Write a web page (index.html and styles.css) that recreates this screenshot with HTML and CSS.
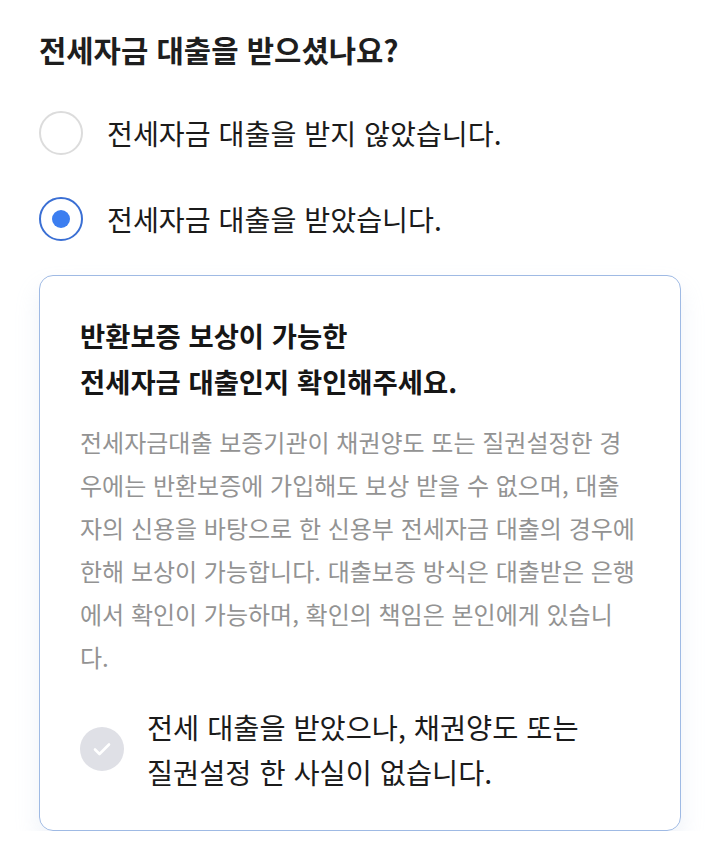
FILE: index.html
```html
<!DOCTYPE html>
<html lang="ko">
	<head>
		<meta charset="utf-8" />
		<meta name="viewport" content="width=device-width, initial-scale=1.0" />
		<title>전세자금 대출</title>
		<link rel="stylesheet" href="styles.css">
	</head>
	<body>
		<div class="page">
			<!-- 질문 -->
			<h2 class="question">전세자금 대출을 받으셨나요?</h2>
			<!-- 선택지 -->
			<div class="options">
				<div class="option">
					<span class="radio"></span>
					<span class="label">전세자금 대출을 받지 않았습니다.</span>
				</div>
				<div class="option">
					<span class="radio checked"></span>
					<span class="label">전세자금 대출을 받았습니다.</span>
				</div>
			</div>
			<!-- 안내 카드 -->
			<div class="card">
				<div class="card-title">반환보증 보상이 가능한<br>전세자금 대출인지 확인해주세요.</div>
				<p class="card-desc">전세자금대출 보증기관이 채권양도 또는 질권설정한 경우에는 반환보증에 가입해도 보상 받을 수 없으며, 대출자의 신용을 바탕으로 한 신용부 전세자금 대출의 경우에 한해 보상이 가능합니다. 대출보증 방식은 대출받은 은행에서 확인이 가능하며, 확인의 책임은 본인에게 있습니다.</p>
				<div class="confirm">
					<span class="check">
						<svg width="20" height="16" viewBox="0 0 20 16"><path d="M3 8.5l4.5 4.5L17 3.5" fill="none" stroke="#fff" stroke-width="2.6" stroke-linecap="round" stroke-linejoin="round"/></svg>
					</span>
					<span class="confirm-text">전세 대출을 받았으나, 채권양도 또는<br>질권설정 한 사실이 없습니다.</span>
				</div>
			</div>
			<!-- 안내 카드 end -->
		</div>
	</body>
</html>
```

FILE: styles.css
```css
html,
body {
	margin: 0;
	padding: 0;
	background: #fff;
	font-family: "Noto Sans CJK KR", "Noto Sans", sans-serif;
	color: #1b1b1b;
}
.page
{
	padding: 24px 39px 0 39px;
}
.question
{
	margin: 0;
	font-size: 29.7px;
	font-weight: 700;
	line-height: 52px;
	color: #1e1e1e;
}
.options
{
	display: flex;
	flex-direction: column;
	gap: 42px;
	margin-top: 35px;
}
.option
{
	display: flex;
	align-items: center;
	gap: 24px;
	height: 44px;
}
.radio
{
	box-sizing: border-box;
	width: 44px;
	height: 44px;
	border-radius: 50%;
	border: 2px solid #dcdcdc;
	display: flex;
	align-items: center;
	justify-content: center;
	flex-shrink: 0;
}
.radio.checked
{
	border-color: #3a6fd4;
}
.radio.checked::after
{
	content: '';
	width: 18px;
	height: 18px;
	border-radius: 50%;
	background: #3c7ef0;
}
.label
{
	font-size: 28.2px;
	line-height: 44px;
}
.card
{
	margin-top: 34px;
	border: 1.5px solid #9fbae4;
	border-radius: 14px;
	padding: 36px 40px 36px 40px;
	box-shadow: 0 14px 24px rgba(170, 190, 220, 0.2);
}
.card-title
{
	font-size: 27.4px;
	font-weight: 700;
	line-height: 46px;
	color: #161616;
}
.card-desc
{
	margin: 16px 0 0 0;
	font-size: 24px;
	line-height: 43px;
	color: #939393;
	word-break: break-all;
}
.confirm
{
	display: flex;
	align-items: center;
	gap: 23px;
	margin-top: 26px;
}
.check
{
	width: 44px;
	height: 44px;
	border-radius: 50%;
	background: #dfe0e6;
	display: flex;
	align-items: center;
	justify-content: center;
	flex-shrink: 0;
}
.confirm-text
{
	font-size: 28.4px;
	line-height: 45px;
}
```
